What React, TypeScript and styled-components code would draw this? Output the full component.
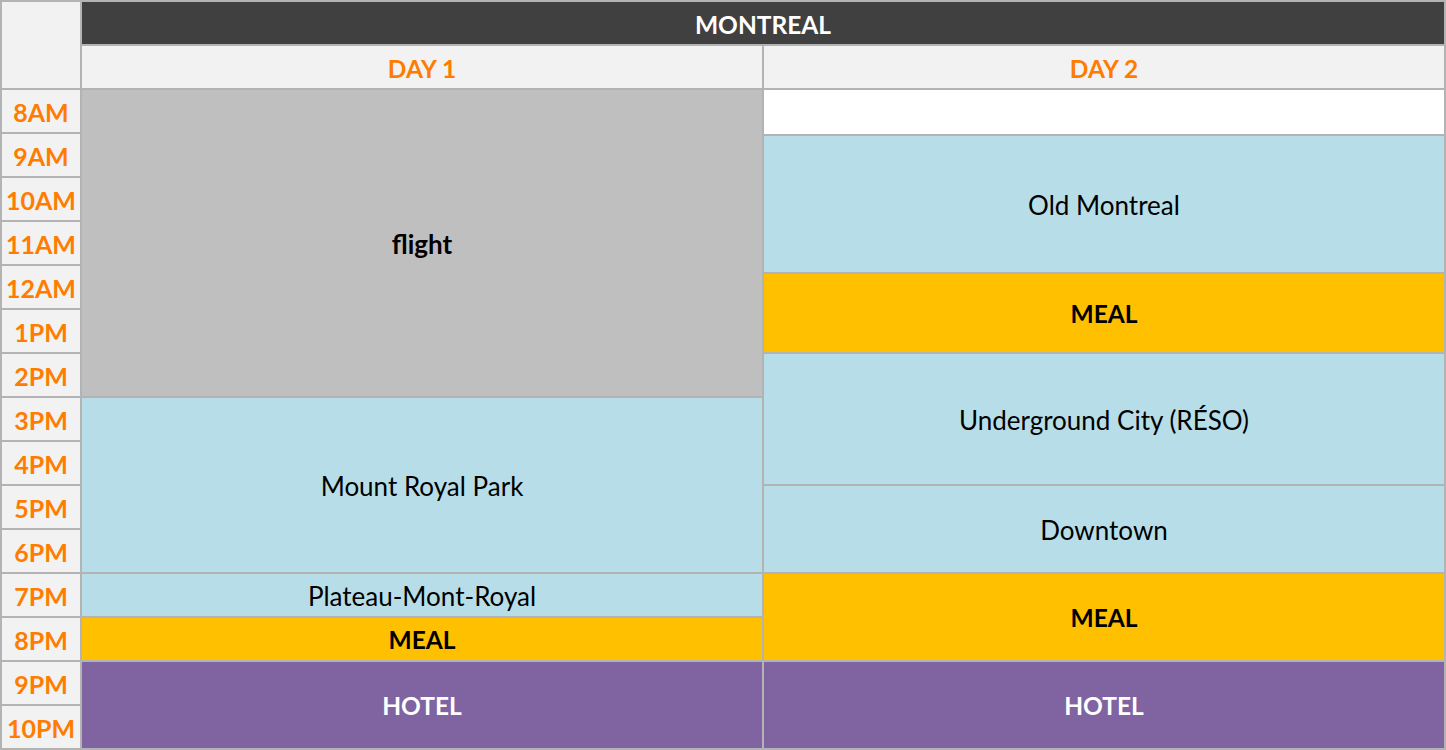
import React from "react";
import styled, { createGlobalStyle } from "styled-components";

const GlobalStyle = createGlobalStyle`
  html, body {
    margin: 0;
    padding: 0;
    background: #ffffff;
  }
  body {
    font-family: Lato, "Open Sans", sans-serif;
  }
`;

type Tone = "flight" | "sight" | "meal" | "hotel" | "empty";

const tones: Record<Tone, { bg: string; fg: string; weight: number; size: number }> = {
  flight: { bg: "#bfbfbf", fg: "#000000", weight: 700, size: 26 },
  sight: { bg: "#b7dee8", fg: "#000000", weight: 400, size: 26 },
  meal: { bg: "#ffc000", fg: "#000000", weight: 700, size: 24.5 },
  hotel: { bg: "#8064a2", fg: "#ffffff", weight: 700, size: 24.5 },
  empty: { bg: "#ffffff", fg: "#000000", weight: 400, size: 26 },
};

const Sheet = styled.div`
  display: grid;
  grid-template-columns: 78px 680px 680px;
  grid-template-rows: 42px 42px 658px;
  gap: 2px;
  padding: 2px;
  width: 1446px;
  box-sizing: border-box;
  background: #b3b3b3;
`;

const Cell = styled.div`
  display: flex;
  align-items: center;
  justify-content: center;
  padding-top: 3px;
  box-sizing: border-box;
  white-space: nowrap;
`;

const Corner = styled(Cell)`
  grid-column: 1;
  grid-row: 1 / span 2;
  background: #f2f2f2;
`;

const Title = styled(Cell)`
  grid-column: 2 / span 2;
  background: #404040;
  color: #ffffff;
  font-weight: 700;
  font-size: 24.5px;
`;

const DayHead = styled(Cell)`
  background: #f2f2f2;
  color: #ff7c00;
  font-weight: 700;
  font-size: 24.5px;
`;

const Column = styled.div`
  display: flex;
  flex-direction: column;
  gap: 2px;
`;

const Hour = styled(Cell)`
  height: 42px;
  flex: none;
  padding-top: 2px;
  background: #f2f2f2;
  color: #ff7c00;
  font-weight: 700;
  font-size: 25px;
`;

const Slot = styled(Cell)<{ $tone: Tone }>`
  flex: none;
  padding-top: 1px;
  background: ${(p) => tones[p.$tone].bg};
  color: ${(p) => tones[p.$tone].fg};
  font-weight: ${(p) => tones[p.$tone].weight};
  font-size: ${(p) => tones[p.$tone].size}px;
`;

const hours = [
  "8AM", "9AM", "10AM", "11AM", "12AM", "1PM", "2PM", "3PM",
  "4PM", "5PM", "6PM", "7PM", "8PM", "9PM", "10PM",
];

type Item = { h: number; tone: Tone; label: string };

// day 1 follows the hour rows (44px a row, minus the rule)
const dayOne: Item[] = [
  { h: 7 * 44 - 2, tone: "flight", label: "flight" },
  { h: 4 * 44 - 2, tone: "sight", label: "Mount Royal Park" },
  { h: 42, tone: "sight", label: "Plateau-Mont-Royal" },
  { h: 42, tone: "meal", label: "MEAL" },
  { h: 86, tone: "hotel", label: "HOTEL" },
];

// day 2 rows don't line up with the hour column in the sheet
const dayTwo: Item[] = [
  { h: 44, tone: "empty", label: "" },
  { h: 136, tone: "sight", label: "Old Montreal" },
  { h: 78, tone: "meal", label: "MEAL" },
  { h: 130, tone: "sight", label: "Underground City (RÉSO)" },
  { h: 86, tone: "sight", label: "Downtown" },
  { h: 86, tone: "meal", label: "MEAL" },
  { h: 86, tone: "hotel", label: "HOTEL" },
];

const DayColumn = ({ items }: { items: Item[] }) => (
  <Column>
    {items.map((s, i) => (
      <Slot key={i} $tone={s.tone} style={{ height: s.h }}>
        {s.label}
      </Slot>
    ))}
  </Column>
);

export default function App() {
  return (
    <>
      <GlobalStyle />
      <Sheet>
        <Corner />
        <Title>MONTREAL</Title>
        <DayHead>DAY 1</DayHead>
        <DayHead>DAY 2</DayHead>
        <Column>
          {hours.map((h) => (
            <Hour key={h}>{h}</Hour>
          ))}
        </Column>
        <DayColumn items={dayOne} />
        <DayColumn items={dayTwo} />
      </Sheet>
    </>
  );
}
